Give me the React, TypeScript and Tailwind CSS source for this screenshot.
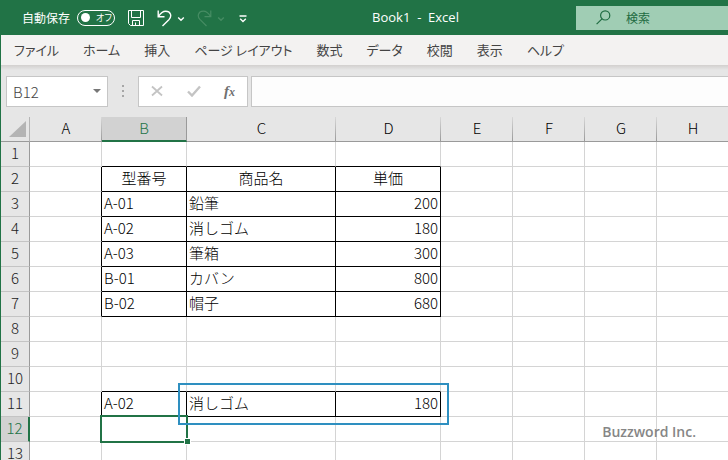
import { clsx } from 'clsx';

const MENU_ITEMS = ['ファイル', 'ホーム', '挿入', 'ページ レイアウト', '数式', 'データ', '校閲', '表示', 'ヘルプ'];

const COLUMNS = [
  { name: 'A', width: 'w-[72px]' },
  { name: 'B', width: 'w-[85px]' },
  { name: 'C', width: 'w-[149px]' },
  { name: 'D', width: 'w-[105px]' },
  { name: 'E', width: 'w-[72px]' },
  { name: 'F', width: 'w-[72px]' },
  { name: 'G', width: 'w-[72px]' },
  { name: 'H', width: 'w-[72px]' },
];

const ROWS = [1, 2, 3, 4, 5, 6, 7, 8, 9, 10, 11, 12, 13];

const CELLS: Record<number, string[]> = {
  2: ['型番号', '商品名', '単価'],
  3: ['A-01', '鉛筆', '200'],
  4: ['A-02', '消しゴム', '180'],
  5: ['A-03', '筆箱', '300'],
  6: ['B-01', 'カバン', '800'],
  7: ['B-02', '帽子', '680'],
  11: ['A-02', '消しゴム', '180'],
};

const Chevron = () => (
  <svg className="h-2 w-2" viewBox="0 0 8 8" fill="none" stroke="currentColor" strokeWidth="1.4">
    <path d="M1.2 2.5L4 5.2l2.8-2.7" />
  </svg>
);

const TitleBar = () => (
  <header className="flex h-[35px] items-center bg-[#217346] text-white">
    <div className="flex w-[255px] shrink-0 items-center pl-[22px]">
      <label className="flex items-center gap-[7px] text-xs">
        自動保存
        <span className="flex h-4 w-[38px] items-center gap-[6px] rounded-full border border-white pl-[3px] text-[9px] [font-feature-settings:'palt']">
          <input type="checkbox" className="size-[9px] shrink-0 appearance-none rounded-full bg-white" />
          オフ
        </span>
      </label>
      <button aria-label="上書き保存" className="mt-[2px] ml-[13px]">
        <svg className="h-[17px] w-[17px]" viewBox="0 0 17 17" fill="none" stroke="currentColor">
          <path d="M.5.5h15v15h-13l-2-2zM3.500.5v7h9v-7M4.500 15.500v-5h7v5M7.500 12.500v3" />
        </svg>
      </button>
      <button aria-label="元に戻す" className="mt-[2px] ml-3 flex items-center gap-[5px]">
        <svg className="h-[17px] w-[15px]" viewBox="0 0 15 17" fill="none" stroke="currentColor" strokeWidth="1.4">
          <path d="M1.200.5v6.200h6.300M1.500 6.500C3.500 3 6 1.200 8.800 1.200c4.600 0 6.500 4.700 3.300 8.200L5.500 16" />
        </svg>
        <Chevron />
      </button>
      <button aria-label="やり直し" className="mt-[2px] ml-3 flex items-center gap-[5px] text-[#468c63]">
        <svg className="h-[17px] w-[15px]" viewBox="0 0 15 17" fill="none" stroke="currentColor" strokeWidth="1.2">
          <path d="M13.800.5v6.200H7.500M13.500 6.500C11.500 3 9 1.200 6.200 1.200c-4.600 0-6.500 4.700-3.300 8.200L9.500 16" />
        </svg>
        <Chevron />
      </button>
      <button aria-label="クイック アクセス ツール バーのユーザー設定" className="mt-[2px] ml-[14px]">
        <svg className="h-2 w-2" viewBox="0 0 8 8" fill="none" stroke="currentColor" strokeWidth="1.300">
          <path d="M.5 1h7M1.200 3.700L4 6.500l2.800-2.800" />
        </svg>
      </button>
    </div>
    <h1 className="flex-1 text-center font-['Open_Sans',sans-serif] text-[13px] whitespace-pre">Book1  -  Excel</h1>
    <label className="flex h-6 w-[152px] shrink-0 items-center gap-[15px] bg-[#a0cdb4] pl-5 text-[#1e6b41]">
      <svg className="h-[15px] w-[15px] shrink-0" viewBox="0 0 15 15" fill="none" stroke="currentColor" strokeWidth="1.200">
        <circle cx="9.200" cy="5.400" r="4.600" />
        <path d="M6 8.800L.6 14.200" />
      </svg>
      <input aria-label="検索" placeholder="検索" className="w-full min-w-0 text-xs outline-none placeholder:text-[#1e6b41]" />
    </label>
  </header>
);

const MenuBar = () => (
  <nav className="flex h-[30px] items-center gap-6 overflow-hidden bg-[#f3f2f1] pl-[13px] text-[13px] whitespace-nowrap text-[#444] [font-feature-settings:'palt']">
    {MENU_ITEMS.map((item) => (
      <button key={item}>{item}</button>
    ))}
  </nav>
);

const FormulaBar = () => (
  <div className="flex h-[52px] items-center bg-[#e6e6e6] bg-[linear-gradient(#d2d0ce,#e6e6e6)] bg-size-[100%_5px] bg-no-repeat pl-[5px]">
    <div className="flex h-[31px] w-[102px] shrink-0 items-center border border-[#c6c6c6] bg-white">
      <input
        aria-label="名前ボックス"
        defaultValue="B12"
        className="w-full min-w-0 pt-[2px] pl-[6px] text-[15px] font-light text-[#444] outline-none"
      />
      <button aria-label="名前の一覧" className="px-[6px]">
        <svg className="h-1 w-2" viewBox="0 0 8 4">
          <path d="M0 0h8L4 4z" fill="#777" />
        </svg>
      </button>
    </div>
    <svg className="mx-[14px] h-3 w-[2px] shrink-0" viewBox="0 0 2 12" fill="#a6a6a6">
      <path d="M0 0h2v2H0zM0 5h2v2H0zM0 10h2v2H0z" />
    </svg>
    <div className="flex h-[31px] w-[110px] shrink-0 items-center justify-between border border-[#c6c6c6] bg-white px-3 text-[#c4c4c4]">
      <button aria-label="キャンセル">
        <svg className="h-3 w-3" viewBox="0 0 12 12" fill="none" stroke="currentColor" strokeWidth="1.800">
          <path d="M1 1.500l10 9M11 1.500l-10 9" />
        </svg>
      </button>
      <button aria-label="入力">
        <svg className="h-3 w-[14px]" viewBox="0 0 14 12" fill="none" stroke="currentColor" strokeWidth="2.400">
          <path d="M1 6.500l4 4L13 1.500" />
        </svg>
      </button>
      <button aria-label="関数の挿入" className="font-['Liberation_Serif',serif] text-[15px] leading-4 font-bold text-[#707070] italic">
        f<span className="text-xs">x</span>
      </button>
    </div>
    <input
      aria-label="数式バー"
      className="ml-[3px] h-[31px] min-w-0 flex-1 border border-r-0 border-[#c6c6c6] bg-[#fdfdfd] px-2 text-[15px] outline-none"
    />
  </div>
);

// Each cell draws its own right and bottom line, so a box also needs the cells before and above it.
const lineClasses = (row: number, col: number) => {
  const inTable = (r: number) => r in CELLS;
  const right = inTable(row) && col <= 3;
  const bottom = (inTable(row) || inTable(row + 1)) && col >= 1 && col <= 3;
  return clsx(right ? 'border-r-black' : 'border-r-[#d4d4d4]', bottom ? 'border-b-black' : 'border-b-[#d4d4d4]');
};

const Sheet = () => (
  <table className="w-max table-fixed border-separate border-spacing-0 text-[15px] leading-[22px] font-light text-black">
    <thead>
      <tr className="h-[25px] bg-[#e6e6e6]">
        <th className="w-[29px] border-r border-b border-r-[#b5b5b5] border-b-[#9a9a9a] p-0 align-top">
          <svg className="mt-1 ml-2 h-4 w-[17px]" viewBox="0 0 17 16">
            <path d="M17 0v16H0z" fill="#b4b4b4" />
          </svg>
        </th>
        {COLUMNS.map(({ name, width }) => (
          <th
            key={name}
            className={clsx(
              width,
              'bg-right bg-no-repeat p-0 align-top font-light',
              name === 'B'
                ? 'border-r border-b-2 border-r-[#9a9a9a] border-b-[#217346] bg-[#d2d2d2] text-[#217346]'
                : 'border-b border-[#9a9a9a] bg-[linear-gradient(#d8d8d8,#9a9a9a)] bg-size-[1px_100%]'
            )}
          >
            {name}
          </th>
        ))}
      </tr>
    </thead>
    <tbody>
      {ROWS.map((row) => (
        <tr key={row} className="h-[25px]">
          <th
            className={clsx(
              'border-b border-b-[#c4c4c4] p-0 align-top font-light',
              row === 12
                ? 'border-r-2 border-r-[#217346] bg-[#d2d2d2] text-[#217346]'
                : 'border-r border-r-[#9a9a9a] bg-[#e6e6e6] text-[#222]'
            )}
          >
            {row}
          </th>
          {COLUMNS.map(({ name }, col) => (
            <td
              key={name}
              className={clsx(
                'relative border-r border-b px-[2px] py-0 align-top whitespace-nowrap',
                lineClasses(row, col),
                row === 2 ? 'text-center' : name === 'D' && 'text-right'
              )}
            >
              {CELLS[row]?.[col - 1]}
              {row === 12 && name === 'B' && (
                <div className="absolute -inset-[2px] z-10 border-2 border-[#217346]">
                  <div className="absolute -right-[5px] -bottom-1 size-[7px] border border-white bg-[#217346]" />
                </div>
              )}
              {row === 11 && name === 'C' && (
                <div className="absolute -top-[9px] -left-[9px] z-20 h-[42px] w-[271px] border-2 border-[#2e8fc0]" />
              )}
            </td>
          ))}
        </tr>
      ))}
    </tbody>
  </table>
);

export default function App() {
  return (
    <div className="relative flex h-screen flex-col overflow-hidden bg-white font-['Noto_Sans_CJK_JP',sans-serif]">
      <TitleBar />
      <main className="min-h-0 flex-1 overflow-hidden border-l border-[#217346]">
        <MenuBar />
        <FormulaBar />
        <Sheet />
      </main>
      <p className="absolute right-8 bottom-[18px] z-30 font-['Open_Sans',sans-serif] text-sm font-semibold text-[#868686]">
        Buzzword Inc.
      </p>
    </div>
  );
}
